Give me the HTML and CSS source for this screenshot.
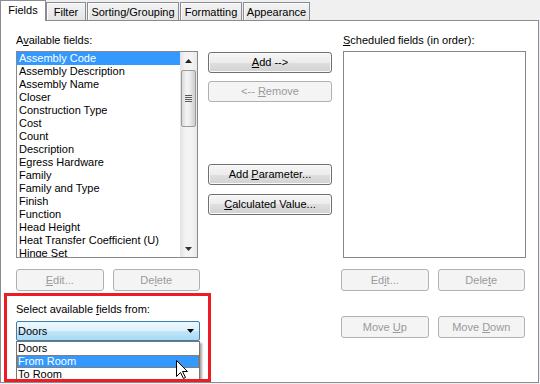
FILE: index.html
```html
<!DOCTYPE html>
<html lang="en">
<head>
  <meta charset="UTF-8" />
  <title>Schedule Properties - Fields</title>
  <link rel="stylesheet" href="styles.css">
</head>
<body>

  <!-- Tabs -->
  <div class="tabs">
    <div class="tab tab-active tab-fields">Fields</div>
    <div class="tab tab-filter">Filter</div>
    <div class="tab tab-sorting">Sorting/Grouping</div>
    <div class="tab tab-formatting">Formatting</div>
    <div class="tab tab-appearance">Appearance</div>
  </div>

  <!-- Fields page -->
  <div class="panel">

    <!-- Left column -->
    <div class="col col-left">
      <div class="label">A<u>v</u>ailable fields:</div>
      <div class="listbox">
        <ul class="items">
          <li class="selected">Assembly Code</li>
          <li>Assembly Description</li>
          <li>Assembly Name</li>
          <li>Closer</li>
          <li>Construction Type</li>
          <li>Cost</li>
          <li>Count</li>
          <li>Description</li>
          <li>Egress Hardware</li>
          <li>Family</li>
          <li>Family and Type</li>
          <li>Finish</li>
          <li>Function</li>
          <li>Head Height</li>
          <li>Heat Transfer Coefficient (U)</li>
          <li>Hinge Set</li>
        </ul>
        <div class="scrollbar">
          <div class="sb-btn">
            <svg width="7" height="4" viewBox="0 0 7 4"><polygon points="3.5,0 7,4 0,4" fill="#222"/></svg>
          </div>
          <div class="thumb"><span class="grip"></span></div>
          <div class="sb-space"></div>
          <div class="sb-btn">
            <svg width="7" height="4" viewBox="0 0 7 4"><polygon points="0,0 7,0 3.5,4" fill="#333"/></svg>
          </div>
        </div>
      </div>
      <div class="btn-row">
        <button class="btn" disabled><u>E</u>dit...</button>
        <button class="btn" disabled>De<u>l</u>ete</button>
      </div>

      <!-- Red callout -->
      <div class="callout">
        <div class="label">Select available <u>f</u>ields from:</div>
        <div class="combo">
          <span>Doors</span>
          <svg width="7" height="4" viewBox="0 0 7 4"><polygon points="0,0 7,0 3.5,4" fill="#000"/></svg>
        </div>
        <ul class="combo-list">
          <li>Doors</li>
          <li class="selected">From Room</li>
          <li>To Room</li>
        </ul>
        <svg class="cursor" width="12" height="19" viewBox="0 0 12 19">
          <path d="M0.5 0.5 L0.5 16.5 L4.5 12.5 L7.5 18.5 L9.5 17.5 L6.5 11.5 L11.5 11.5 Z" fill="#fff" stroke="#000" stroke-width="1"/>
        </svg>
      </div>
    </div>

    <!-- Middle column -->
    <div class="col col-mid">
      <button class="btn btn-wide btn-add"><u>A</u>dd --&gt;</button>
      <button class="btn btn-wide btn-remove" disabled>&lt;-- <u>R</u>emove</button>
      <button class="btn btn-wide btn-param">Add <u>P</u>arameter...</button>
      <button class="btn btn-wide btn-calc"><u>C</u>alculated Value...</button>
    </div>

    <!-- Right column -->
    <div class="col col-right">
      <div class="label label-right"><u>S</u>cheduled fields (in order):</div>
      <div class="listbox listbox-right"></div>
      <div class="btn-row">
        <button class="btn" disabled>Ed<u>i</u>t...</button>
        <button class="btn" disabled>Dele<u>t</u>e</button>
      </div>
      <div class="btn-row btn-row-move">
        <button class="btn" disabled>Move <u>U</u>p</button>
        <button class="btn" disabled>Move <u>D</u>own</button>
      </div>
    </div>

  </div>

</body>
</html>
```

FILE: styles.css
```css
body {
  margin: 0;
  background: #f0f0f0;
  font-family: "Liberation Sans", Arial, sans-serif;
  font-size: 11px;
  line-height: 13px;
  color: #000;
}

/* Tabs */
.tabs {
  display: flex;
  align-items: flex-end;
  height: 20px;
}

.tab {
  box-sizing: border-box;
  height: 18px;
  padding-top: 3px;
  margin-right: 1px;
  text-align: center;
  border: 1px solid #898c95;
  border-bottom: none;
  background: linear-gradient(#f4f4f4, #e4e4e4);
  box-shadow: inset 1px 1px 0 #fbfbfb;
}

.tab-active {
  position: relative;
  z-index: 1;
  height: 21px;
  margin-bottom: -1px;
  margin-right: 0;
  background: #fff;
  box-shadow: none;
}

.tab-fields { width: 46px; }
.tab-filter { width: 40px; }
.tab-sorting { width: 92px; }
.tab-formatting { width: 62px; }
.tab-appearance { width: 67px; }

/* Page */
.panel {
  box-sizing: border-box;
  width: 539px;
  height: 363px;
  padding: 13px 0 0 15px;
  border: 1px solid #898c95;
  background: #fff;
  display: grid;
  grid-template-columns: 184px 124px 185px;
  column-gap: 8px;
  align-items: start;
}

.label {
  height: 13px;
  white-space: nowrap;
}

/* List boxes */
.listbox {
  box-sizing: border-box;
  width: 182px;
  height: 207px;
  margin-top: 4px;
  border: 1px solid #828790;
  display: flex;
  overflow: hidden;
}

.items {
  flex: 1;
  margin: 0;
  padding: 0;
  list-style: none;
  overflow: hidden;
}

.items li {
  height: 13px;
  padding-left: 2px;
  white-space: nowrap;
}

.selected {
  background: #3399ff;
  color: #fff;
}

.scrollbar {
  width: 17px;
  display: flex;
  flex-direction: column;
  background: linear-gradient(to right, #e3e3e3, #f3f3f3 30%, #f3f3f3 70%, #e9e9e9);
}

.sb-btn {
  height: 17px;
  display: flex;
  align-items: center;
  justify-content: center;
}

.thumb {
  box-sizing: border-box;
  height: 57px;
  margin: 1px 1px 0;
  border: 1px solid #9a9a9a;
  border-radius: 2px;
  background: linear-gradient(to right, #d8d8d8, #f4f4f4 35%, #ececec 60%, #cdcdcd);
  display: flex;
  align-items: center;
  justify-content: center;
}

.grip {
  width: 7px;
  height: 7px;
  background: repeating-linear-gradient(#5a5a5a 0 1px, #eeeeee 1px 2px);
}

.sb-space {
  flex: 1;
}

/* Buttons */
.btn-row {
  display: flex;
  gap: 9px;
  margin-top: 11px;
}

.btn {
  box-sizing: border-box;
  width: 88px;
  height: 22px;
  padding: 0;
  font: inherit;
  color: #000;
  border: 1px solid #707070;
  border-radius: 3px;
  background: linear-gradient(#f6f6f6, #ececec 50%, #dfdfdf 50%, #d2d2d2);
  box-shadow: inset 0 0 0 1px #fafafa;
}

.btn:disabled {
  color: #9a9a9a;
  border-color: #adb2b5;
  background: #f4f4f4;
  box-shadow: none;
}

.btn-wide {
  width: 124px;
  height: 21px;
}

.col-mid {
  display: flex;
  flex-direction: column;
}

.btn-add { margin-top: 18px; }
.btn-remove { margin-top: 8px; }
.btn-param { margin-top: 62px; }
.btn-calc { margin-top: 9px; }

/* Right column */
.col-right {
  margin-left: 1px;
}

.label-right {
  padding-left: 2px;
}

.listbox-right {
  width: 183px;
  margin-left: 2px;
}

.btn-row-move {
  margin-top: 25px;
}

/* Red callout with the open drop-down */
.callout {
  position: relative;
  box-sizing: border-box;
  width: 207px;
  height: 89px;
  margin: 2px 0 0 -12px;
  padding: 7px 0 0 9px;
  border: 3px solid #ed1c24;
  overflow: hidden;
}

.combo {
  box-sizing: border-box;
  width: 184px;
  height: 20px;
  margin-top: 5px;
  padding: 0 5px 0 1px;
  border: 1px solid #3c7fb1;
  border-radius: 2px;
  background: linear-gradient(#eef8fd, #dcf0fb 50%, #c3e6f8 50%, #a9d9f4);
  display: flex;
  align-items: center;
  justify-content: space-between;
}

.combo-list {
  box-sizing: border-box;
  width: 184px;
  margin: 0;
  padding: 0;
  list-style: none;
  border: 1px solid #767676;
  background: #fff;
  box-shadow: 2px 2px 2px rgba(0, 0, 0, 0.35);
}

.combo-list li {
  height: 13px;
  padding-left: 1px;
}

.combo-list .selected {
  outline: 1px dotted #cc6600;
  outline-offset: -1px;
}

.cursor {
  position: absolute;
  left: 169px;
  top: 64px;
}
```
